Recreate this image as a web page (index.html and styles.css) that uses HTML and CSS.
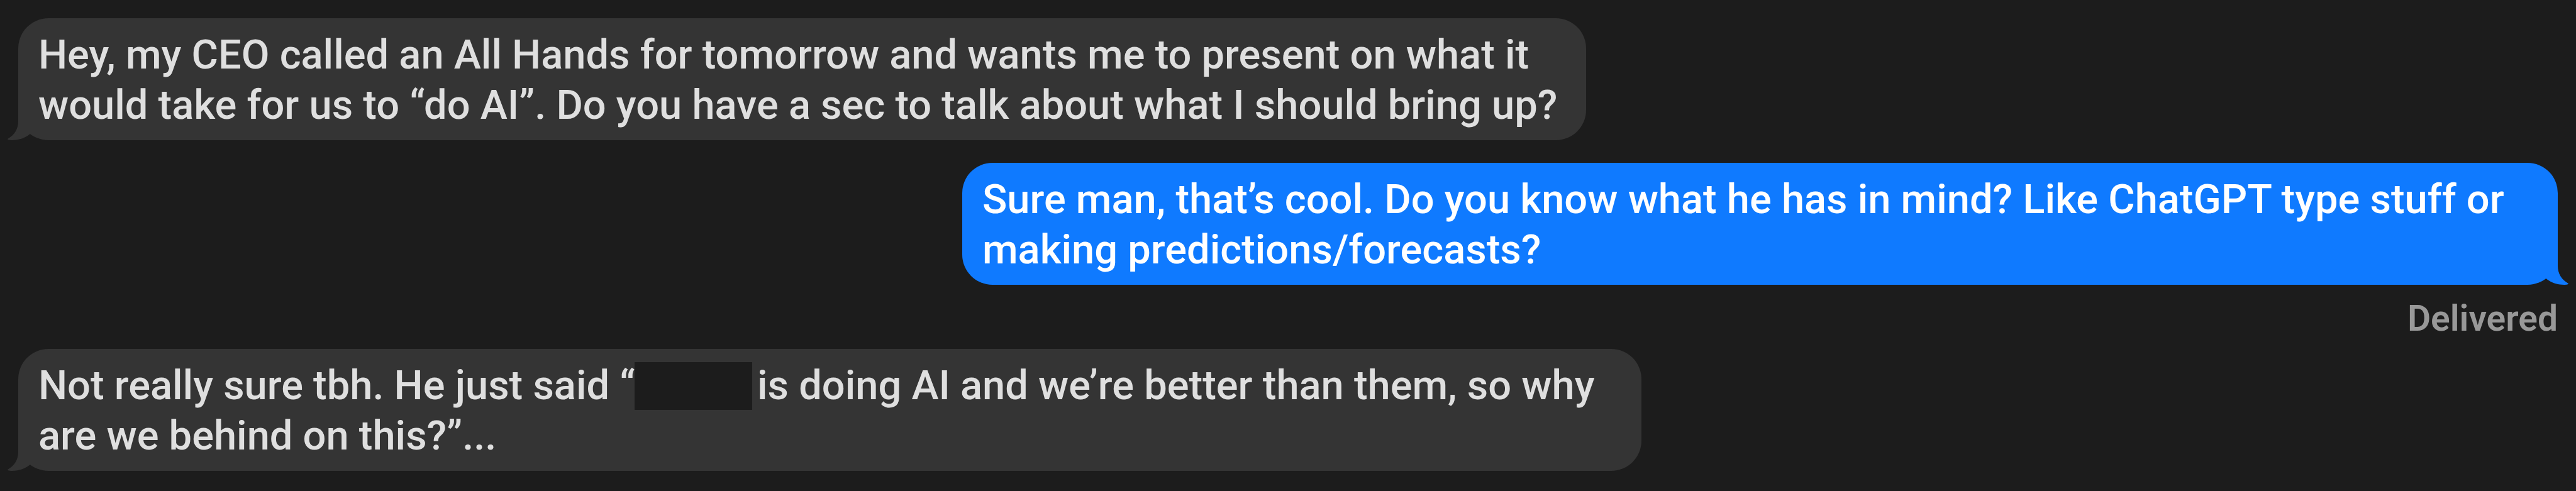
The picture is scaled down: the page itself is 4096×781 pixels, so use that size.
FILE: index.html
```html
<!DOCTYPE html>
<html lang="en">
<head>
<meta charset="utf-8">
<title>Messages</title>
<link rel="stylesheet" href="styles.css">
</head>
<body>
<main class="thread">
  <div class="bubble received first">
    <p class="text">Hey, my CEO called an All Hands for tomorrow and wants me to present on what it would take for us to “do AI”. Do you have a sec to talk about what I should bring up?</p>
    <svg class="tail" viewBox="0 0 40 60" aria-hidden="true"><path d="M18 0V30C18 42 12 52 1 58C1 59 3 60 8 60C20 60 30 56 38 49V0Z"/></svg>
  </div>
  <div class="sent-group">
    <div class="bubble sent">
      <p class="text">Sure man, that’s cool. Do you know what he has in mind? Like ChatGPT type stuff or making predictions/forecasts?</p>
      <svg class="tail" viewBox="0 0 40 60" aria-hidden="true"><path d="M18 0V30C18 42 12 52 1 58C1 59 3 60 8 60C20 60 30 56 38 49V0Z"/></svg>
    </div>
    <p class="status">Delivered</p>
  </div>
  <div class="bubble received">
    <p class="text">Not really sure tbh. He just said “<span class="redacted"></span>is doing AI and we’re better than them, so why are we behind on this?”...</p>
    <svg class="tail" viewBox="0 0 40 60" aria-hidden="true"><path d="M18 0V30C18 42 12 52 1 58C1 59 3 60 8 60C20 60 30 56 38 49V0Z"/></svg>
  </div>
</main>
</body>
</html>
```
FILE: styles.css
```css
* { box-sizing: border-box; }

body {
  margin: 0;
  min-height: 100vh;
  background: #1c1c1c;
  font-family: Roboto, "Liberation Sans", sans-serif;
  font-weight: 500;
}

.thread {
  display: flex;
  flex-direction: column;
  gap: 16px;
  padding: 29px;
}

.bubble {
  position: relative;
  max-width: 2581px;
  padding: 18px 32px 16px;
  border-radius: 48px;
}

.text {
  margin: 0;
  font-size: 65px;
  line-height: 80px;
}

.received {
  align-self: flex-start;
  background: #343434;
  color: #dfdfdf;
  fill: #343434;
}

.first {
  max-width: 2493px;
  margin-bottom: 20px;
}

.sent-group {
  display: flex;
  flex-direction: column;
  align-items: flex-end;
  gap: 22px;
}

.sent {
  max-width: 2537px;
  background: #0f7aff;
  color: #fff;
  fill: #0f7aff;
}

.tail {
  position: absolute;
  left: -18px;
  bottom: 0;
  width: 40px;
  height: 60px;
}

.sent .tail {
  left: auto;
  right: -18px;
  transform: scaleX(-1);
}

.status {
  margin: 0;
  color: #989898;
  font-size: 57px;
  font-weight: 600;
  line-height: 64px;
}

.redacted {
  display: inline-block;
  width: 187px;
  height: 76px;
  margin: 0 8px 0 -1px;
  background: #1c1c1c;
  vertical-align: -17px;
}
```
